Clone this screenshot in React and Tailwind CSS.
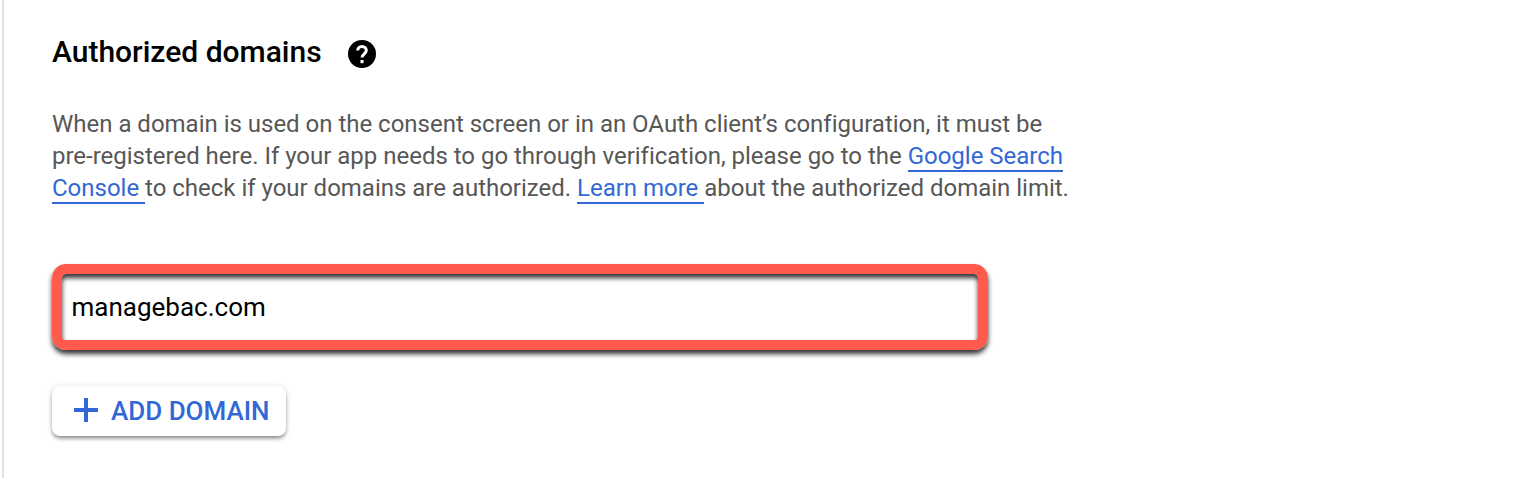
export default function App() {
  const linkClass = "border-b-2 border-[#3367d6] text-[#3367d6]";

  return (
    <div className="flex h-[478px] w-full overflow-hidden bg-white pl-[2px] font-['Roboto',sans-serif]">
      <div className="w-full border-l-2 border-[#e0e0e0] pl-12">
        {/* heading */}
        <div className="mt-[34px] flex h-9 items-center gap-[26px]">
          <h2 className="whitespace-nowrap text-[30px] font-medium leading-9 text-black">
            Authorized domains
          </h2>
          <svg className="mt-1 h-7 w-7" viewBox="0 0 28 28">
            <circle cx="14" cy="14" r="14" fill="#000" />
            <path
              d="M9.7 10.6c0-2.4 1.8-4.2 4.3-4.2s4.3 1.7 4.3 4c0 3.3-4.3 3.5-4.3 7.2"
              fill="none"
              stroke="#fff"
              strokeWidth="3"
            />
            <path d="M12.5 20h3v3.2h-3z" fill="#fff" />
          </svg>
        </div>

        {/* description */}
        <p className="mt-[38px] whitespace-nowrap text-[24px] leading-8 tracking-[-0.012px] text-[#575757]">
          When a domain is used on the consent screen or in an OAuth client’s configuration, it must be
          <br />
          pre-registered here. If your app needs to go through verification, please go to the{" "}
          <a className={linkClass}>Google Search</a>
          <br />
          <a className={linkClass}>Console&nbsp;</a>
          to check if your domains are authorized.{" "}
          <a className={linkClass}>Learn more&nbsp;</a>
          about the authorized domain limit.
        </p>

        {/* domain input */}
        <div className="mt-[60px] flex h-[86px] w-[936px] items-center rounded-[14px] border-10 border-[#ff5a4c] pl-[9.5px] text-[26px] text-black shadow-[0_4px_5px_rgba(0,0,0,0.8),inset_0_4px_5px_rgba(0,0,0,0.8)]">
          managebac.com
        </div>

        <button className="mt-9 flex h-[50px] w-[234px] items-center rounded-lg bg-white pl-[22px] text-[26px] font-medium text-[#3367d6] shadow-[0_3px_4px_-1px_rgba(0,0,0,0.45),0_1px_6px_rgba(0,0,0,0.14)]">
          <svg className="mr-[13px] -mt-[2px] h-6 w-6" viewBox="0 0 24 24" fill="currentColor">
            <path d="M10 0h4v10h10v4H14v10h-4V14H0v-4h10z" />
          </svg>
          <span className="whitespace-nowrap">ADD DOMAIN</span>
        </button>
      </div>
    </div>
  );
}
